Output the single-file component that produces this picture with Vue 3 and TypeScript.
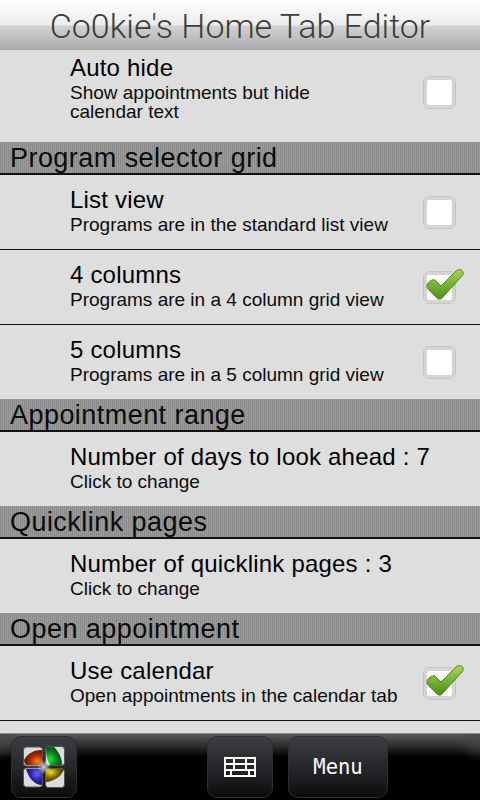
<script setup lang="ts">
interface Row {
  title: string
  sub: string
  checked?: boolean
}

interface Section {
  name?: string
  rows: Row[]
}

const sections: Section[] = [
  {
    rows: [{ title: "Auto hide", sub: "Show appointments but hide calendar text", checked: false }],
  },
  {
    name: "Program selector grid",
    rows: [
      { title: "List view", sub: "Programs are in the standard list view", checked: false },
      { title: "4 columns", sub: "Programs are in a 4 column grid view", checked: true },
      { title: "5 columns", sub: "Programs are in a 5 column grid view", checked: false },
    ],
  },
  {
    name: "Appointment range",
    rows: [{ title: "Number of days to look ahead : 7", sub: "Click to change" }],
  },
  {
    name: "Quicklink pages",
    rows: [{ title: "Number of quicklink pages : 3", sub: "Click to change" }],
  },
  {
    name: "Open appointment",
    rows: [{ title: "Use calendar", sub: "Open appointments in the calendar tab", checked: true }],
  },
]
</script>

<template>
  <div class="screen">
    <header class="title-bar">Co0kie's Home Tab Editor</header>

    <main class="list">
      <template v-for="(section, i) in sections" :key="i">
        <h2 v-if="section.name" class="section">{{ section.name }}</h2>
        <div v-for="row in section.rows" :key="row.title" class="row" :class="{ first: i === 0 }">
          <div class="text">
            <div class="row-title">{{ row.title }}</div>
            <div class="row-sub">{{ row.sub }}</div>
          </div>
          <div v-if="row.checked !== undefined" class="check">
            <svg v-if="row.checked" class="tick" viewBox="0 0 38 31" width="38" height="31">
              <defs>
                <linearGradient id="tick-fill" x1="0" y1="0" x2="0" y2="1">
                  <stop offset="0" stop-color="#a9d352" />
                  <stop offset="1" stop-color="#4a8f1b" />
                </linearGradient>
              </defs>
              <path
                d="M1 16 C2 13 6 10 9 11 L15 17 L30 2 C32 0 36 0 37 3 C37.5 5 37 6 36 7 L17 28 C15 31 12 31 10 28 L2 20 C1 19 1 17 1 16 Z"
                fill="url(#tick-fill)"
                stroke="#4f8a20"
                stroke-width="1"
              />
            </svg>
          </div>
        </div>
      </template>
      <div class="row-rest"></div>
    </main>

    <footer class="bottom-bar">
      <button class="btn start">
        <svg class="flag" viewBox="0 0 42 42" width="42" height="42">
          <defs>
            <radialGradient id="pane-red" cx="0.75" cy="0.75" r="0.8">
              <stop offset="0" stop-color="#ff8a10" />
              <stop offset="0.5" stop-color="#a82a08" />
              <stop offset="1" stop-color="#5a1406" />
            </radialGradient>
            <radialGradient id="pane-green" cx="0.25" cy="0.7" r="0.8">
              <stop offset="0" stop-color="#18f028" />
              <stop offset="0.55" stop-color="#087a20" />
              <stop offset="1" stop-color="#064a18" />
            </radialGradient>
            <radialGradient id="pane-blue" cx="0.7" cy="0.3" r="0.8">
              <stop offset="0" stop-color="#6a60ff" />
              <stop offset="0.55" stop-color="#2a1ca8" />
              <stop offset="1" stop-color="#1a1068" />
            </radialGradient>
            <radialGradient id="pane-yellow" cx="0.25" cy="0.25" r="0.8">
              <stop offset="0" stop-color="#f8e010" />
              <stop offset="0.55" stop-color="#7a6808" />
              <stop offset="1" stop-color="#3a3004" />
            </radialGradient>
            <radialGradient id="flag-glow">
              <stop offset="0" stop-color="#fff" stop-opacity="0.8" />
              <stop offset="1" stop-color="#fff" stop-opacity="0" />
            </radialGradient>
          </defs>
          <rect x="0.5" y="1" width="19" height="19" rx="3" fill="#dcdcdc" stroke="#555" />
          <rect x="22.5" y="0.5" width="19" height="19" rx="3" fill="#dcdcdc" stroke="#555" />
          <rect x="0.5" y="22" width="19" height="19" rx="3" fill="#dcdcdc" stroke="#555" />
          <rect x="22.5" y="22.5" width="19" height="19" rx="3" fill="#dcdcdc" stroke="#555" />
          <path d="M1 14 C5 7 11 4 19 4 V19 H3 C2 18 1 16 1 14 Z" fill="url(#pane-red)" />
          <path d="M23 1 H31 C36 6 39 12 39 19 H27 C24 14 23 8 23 1 Z" fill="url(#pane-green)" />
          <path d="M3 23 H19 V39 C12 39 6 33 3 23 Z" fill="url(#pane-blue)" />
          <path d="M23 23 H41 C39 30 32 35 23 36 Z" fill="url(#pane-yellow)" />
          <circle cx="21" cy="21" r="7" fill="url(#flag-glow)" />
        </svg>
      </button>
      <button class="btn keyboard">
        <svg viewBox="0 0 32 20" width="32" height="20" fill="none" stroke="#fff" stroke-width="2">
          <path d="M1 1 H31 V19 H1 Z M1 7 H31 M1 13 H31 M10 1 V13 M22 1 V13 M7 13 V19 M25 13 V19" />
        </svg>
      </button>
      <button class="btn menu">Menu</button>
    </footer>
  </div>
</template>

<style scoped>
.screen {
  display: flex;
  flex-direction: column;
  width: 480px;
  height: 800px;
  overflow: hidden;
  background: #dedede;
  font-family: "Liberation Sans", Arial, sans-serif;
  color: #000;
}

.title-bar {
  flex: none;
  height: 50px;
  box-sizing: border-box;
  border-bottom: 1px solid #a8a8a8;
  background: linear-gradient(#ffffff 0, #ececec 25px, #d2d1d2 26px, #aeadaf 49px);
  font-family: Roboto, sans-serif;
  font-weight: 300;
  font-size: 34px;
  line-height: 53px;
  text-align: center;
  color: #3c3c3c;
  white-space: nowrap;
}

.list {
  flex: 1;
  min-height: 0;
  display: flex;
  flex-direction: column;
}

.section {
  flex: none;
  height: 33px;
  box-sizing: border-box;
  margin: 0;
  padding-left: 10px;
  border-bottom: 2px solid #111;
  background: repeating-linear-gradient(90deg, #8b8b8b 0 1px, #9b9b9b 1px 2px);
  font-size: 27px;
  font-weight: 400;
  line-height: 32px;
  color: #0a0a0a;
  letter-spacing: 0.45px;
}

.row {
  flex: none;
  height: 75px;
  box-sizing: border-box;
  display: flex;
  align-items: center;
  padding: 0 24px 0 70px;
  border-bottom: 1px solid #111;
}

.row .text {
  padding-bottom: 3px;
}

.section + .row ~ .section {
  margin-top: -1px;
}

.row.first {
  height: 92px;
  border-bottom: 0;
  align-items: flex-start;
  padding-top: 5px;
}

.row.first .check {
  margin-top: 21px;
}

.row.first .row-sub {
  max-width: 270px;
  line-height: 19px;
}

.text {
  flex: 1;
  min-width: 0;
}

.row-title {
  font-size: 24px;
  line-height: 26px;
  letter-spacing: 0.2px;
}

.row-sub {
  font-size: 19px;
  line-height: 20px;
  margin-top: 2px;
  color: #0c0c0c;
}

.check {
  position: relative;
  flex: none;
  width: 33px;
  height: 33px;
  box-sizing: border-box;
  border: 1px solid #c4c4c4;
  border-radius: 6px;
  background: #fff;
  box-shadow: inset 0 0 0 3px #d4d4d4;
}

.tick {
  position: absolute;
  left: 2px;
  top: -3px;
}

.row-rest {
  flex: 1;
}

.bottom-bar {
  flex: none;
  height: 67px;
  box-sizing: border-box;
  display: flex;
  align-items: flex-start;
  padding: 2px 0 0 11px;
  border-top: 1px solid #8c8c8c;
  background:
    radial-gradient(ellipse 24px 28px at 100% 0, #4a4a4a, transparent),
    radial-gradient(ellipse 24px 28px at 0 0, #4a4a4a, transparent),
    linear-gradient(#5a5a5a 0, #2c2c2c 12px, #000 23px);
}

.btn {
  height: 62px;
  box-sizing: border-box;
  display: flex;
  align-items: center;
  justify-content: center;
  padding: 0;
  border: 1px solid #2f2f2f;
  border-radius: 10px;
  background: linear-gradient(#3c3e44 0, #26272b 30px, #0c0c0d 60px);
  color: #fff;
  font-family: "DejaVu Sans Mono", monospace;
  font-size: 20.5px;
}

.start {
  width: 66px;
}

.keyboard {
  width: 66px;
  margin-left: 130px;
}

.menu {
  width: 100px;
  margin-left: 15px;
}

.flag {
  margin-top: -1px;
}
</style>

<style>
html,
body {
  margin: 0;
  background: #dedede;
}
</style>
